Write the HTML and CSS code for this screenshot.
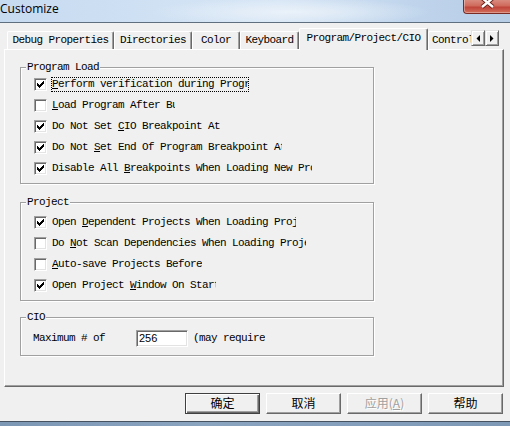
FILE: index.html
```html
<!DOCTYPE html>
<html>
<head>
<meta charset="utf-8">
<title>Customize</title>
<link rel="stylesheet" href="styles.css">
</head>
<body>
<div class="window">
  <div class="titlebar">
    <span class="title">Customize</span>
    <div class="close">
      <svg width="47" height="14" viewBox="0 0 47 14">
        <path d="M19 -2 L30 7 M30 -2 L19 7" stroke="#6b2219" stroke-width="4.2" fill="none"/>
        <path d="M19 -2 L30 7 M30 -2 L19 7" stroke="#ffffff" stroke-width="2.4" fill="none"/>
      </svg>
    </div>
  </div>

  <div class="client">
    <div class="tabstrip">
      <div class="tab t-debug">Debug Properties</div>
      <div class="tab t-dirs">Directories</div>
      <div class="tab t-color">Color</div>
      <div class="tab t-keys">Keyboard</div>
      <div class="tab t-prog active">Program/Project/CIO</div>
      <div class="tab t-ctrl">Control Panel</div>
      <div class="spin">
        <span class="spinbtn"><svg width="4" height="7" viewBox="0 0 4 7"><path d="M4 0 L4 7 L0.5 3.5 Z" fill="#000"/></svg></span>
        <span class="spinbtn"><svg width="4" height="7" viewBox="0 0 4 7"><path d="M0 0 L0 7 L3.5 3.5 Z" fill="#000"/></svg></span>
      </div>
    </div>

    <div class="panel">
      <div class="group g-load">
        <span class="caption">Program Load</span>
        <div class="row"><span class="cb on"><svg width="11" height="11" viewBox="0 0 11 11"><path d="M8 2h1v1H8zM7 3h2v1H7zM2 4h1v1H2zM6 4h3v1H6zM2 5h2v1H2zM5 5h3v1H5zM2 6h5v1H2zM3 7h3v1H3zM4 8h1v1H4z" fill="#000"/></svg></span><span class="lbl focus w-verify"><u>P</u>erform verification during Program Load</span></div>
        <div class="row"><span class="cb"></span><span class="lbl w-loadafter"><u>L</u>oad Program After Build</span></div>
        <div class="row"><span class="cb on"><svg width="11" height="11" viewBox="0 0 11 11"><path d="M8 2h1v1H8zM7 3h2v1H7zM2 4h1v1H2zM6 4h3v1H6zM2 5h2v1H2zM5 5h3v1H5zM2 6h5v1H2zM3 7h3v1H3zM4 8h1v1H4z" fill="#000"/></svg></span><span class="lbl w-cio">Do Not Set <u>C</u>IO Breakpoint At Load</span></div>
        <div class="row"><span class="cb on"><svg width="11" height="11" viewBox="0 0 11 11"><path d="M8 2h1v1H8zM7 3h2v1H7zM2 4h1v1H2zM6 4h3v1H6zM2 5h2v1H2zM5 5h3v1H5zM2 6h5v1H2zM3 7h3v1H3zM4 8h1v1H4z" fill="#000"/></svg></span><span class="lbl w-eop">Do Not <u>S</u>et End Of Program Breakpoint At Load</span></div>
        <div class="row"><span class="cb on"><svg width="11" height="11" viewBox="0 0 11 11"><path d="M8 2h1v1H8zM7 3h2v1H7zM2 4h1v1H2zM6 4h3v1H6zM2 5h2v1H2zM5 5h3v1H5zM2 6h5v1H2zM3 7h3v1H3zM4 8h1v1H4z" fill="#000"/></svg></span><span class="lbl w-disable">Disable All <u>B</u>reakpoints When Loading New Programs</span></div>
      </div>

      <div class="group g-proj">
        <span class="caption">Project</span>
        <div class="row"><span class="cb on"><svg width="11" height="11" viewBox="0 0 11 11"><path d="M8 2h1v1H8zM7 3h2v1H7zM2 4h1v1H2zM6 4h3v1H6zM2 5h2v1H2zM5 5h3v1H5zM2 6h5v1H2zM3 7h3v1H3zM4 8h1v1H4z" fill="#000"/></svg></span><span class="lbl w-dep">Open <u>D</u>ependent Projects When Loading Projects</span></div>
        <div class="row"><span class="cb"></span><span class="lbl w-scan">Do <u>N</u>ot Scan Dependencies When Loading Projects</span></div>
        <div class="row"><span class="cb"></span><span class="lbl w-auto"><u>A</u>uto-save Projects Before Build</span></div>
        <div class="row"><span class="cb on"><svg width="11" height="11" viewBox="0 0 11 11"><path d="M8 2h1v1H8zM7 3h2v1H7zM2 4h1v1H2zM6 4h3v1H6zM2 5h2v1H2zM5 5h3v1H5zM2 6h5v1H2zM3 7h3v1H3zM4 8h1v1H4z" fill="#000"/></svg></span><span class="lbl w-win">Open Project <u>W</u>indow On Startup</span></div>
      </div>

      <div class="group g-cio">
        <span class="caption">CIO</span>
        <div class="cio-row">
          <span class="lbl w-max">Maximum # of</span>
          <span class="edit">256</span>
          <span class="lbl w-may">(may require restart)</span>
        </div>
      </div>
    </div>

    <div class="buttons">
      <span class="btn default">确定</span>
      <span class="btn">取消</span>
      <span class="btn disabled">应用(<u>A</u>)</span>
      <span class="btn">帮助</span>
    </div>
  </div>

  <div class="frame-bottom"></div>
</div>
</body>
</html>
```

FILE: styles.css
```css
html, body {
  margin: 0;
  padding: 0;
}

body {
  width: 510px;
  height: 426px;
  overflow: hidden;
  background: #f0f0f0;
}

.window {
  display: flex;
  flex-direction: column;
  height: 426px;
}

/* ---------- title bar ---------- */
.titlebar {
  height: 22px;
  border-bottom: 1px solid #5f6f80;
  display: flex;
  justify-content: space-between;
  align-items: flex-start;
  background:
    radial-gradient(ellipse 140px 14px at 290px 12px, rgba(236, 243, 250, 0.9), rgba(236, 243, 250, 0)),
    linear-gradient(90deg, #c6daf0 0%, #d1e2f4 35%, #d6e5f5 55%, #c0d5ec 80%, #b7cde6 100%);
}

.title {
  font-family: "Open Sans", "Noto Sans", sans-serif;
  font-size: 12px;
  line-height: 16px;
  padding-top: 1px;
  color: #000;
}

.close {
  width: 47px;
  height: 14px;
  box-sizing: border-box;
  border: 1px solid #7a2c24;
  border-top: 0;
  border-right: 0;
  border-radius: 0 0 0 4px;
  background: linear-gradient(180deg, #d98a7e 0%, #cf6a5c 45%, #c0443a 55%, #d2705c 100%);
  box-shadow: inset 1px 0 0 rgba(255, 255, 255, 0.35), inset 0 -1px 0 rgba(255, 255, 255, 0.3);
  overflow: hidden;
}

.close svg {
  display: block;
  margin-left: -1px;
}

/* ---------- client ---------- */
.client {
  display: flex;
  flex-direction: column;
}

.tabstrip {
  margin-top: 5px;
  height: 21px;
  padding-left: 7px;
  display: flex;
  align-items: flex-end;
  position: relative;
  z-index: 1;
}

.tab {
  box-sizing: border-box;
  height: 18px;
  border-top: 1px solid #ffffff;
  border-left: 1px solid #ffffff;
  border-right: 1px solid #696969;
  box-shadow: inset -1px 0 0 #a0a0a0;
  border-radius: 2px 2px 0 0;
  font-family: "Liberation Mono", "DejaVu Sans Mono", monospace;
  font-size: 11px;
  letter-spacing: -0.6px;
  line-height: 17px;
  color: #000;
  text-align: center;
  white-space: nowrap;
  overflow: hidden;
  flex: none;
}

.t-debug { width: 107px; }
.t-dirs { width: 78px; }
.t-color { width: 48px; }
.t-keys { width: 59px; }
.t-prog { width: 129px; }
.t-ctrl {
  width: 43px;
  text-align: left;
  padding-left: 3px;
  border-right: 0;
  box-shadow: none;
}

.tab.active {
  height: 22px;
  margin-bottom: -1px;
  background: #f0f0f0;
  line-height: 18px;
}

.spin {
  display: flex;
  align-self: flex-start;
  margin-top: 2px;
}

.spinbtn {
  box-sizing: border-box;
  width: 14px;
  height: 16px;
  background: #f0f0f0;
  border-top: 1px solid #e3e3e3;
  border-left: 1px solid #e3e3e3;
  border-right: 1px solid #696969;
  border-bottom: 1px solid #696969;
  box-shadow: inset 1px 1px 0 #ffffff, inset -1px -1px 0 #a0a0a0;
  display: flex;
  align-items: center;
  justify-content: center;
}

/* ---------- panel ---------- */
.panel {
  box-sizing: border-box;
  margin-left: 4px;
  width: 500px;
  height: 338px;
  border-top: 1px solid #ffffff;
  border-left: 1px solid #ffffff;
  border-right: 1px solid #696969;
  border-bottom: 1px solid #696969;
  box-shadow: inset -1px -1px 0 #a0a0a0;
}

.group {
  position: relative;
  box-sizing: border-box;
  width: 354px;
  margin-left: 15px;
  border: 1px solid #a0a0a0;
  box-shadow: inset 1px 1px 0 #ffffff, 1px 1px 0 #ffffff;
}

.g-load {
  margin-top: 17px;
  padding: 6px 0 4px 13px;
}

.g-proj {
  margin-top: 18px;
  padding: 9px 0 4px 13px;
}

.g-cio {
  margin-top: 16px;
  padding: 12px 0 8px 12px;
}

.caption {
  position: absolute;
  top: -7px;
  left: 5px;
  padding: 0 1px;
  background: #f0f0f0;
  font-family: "Liberation Mono", "DejaVu Sans Mono", monospace;
  font-size: 11px;
  letter-spacing: -0.6px;
  line-height: 13px;
  color: #000;
  white-space: nowrap;
}

.row {
  height: 21px;
  display: flex;
  align-items: center;
}

.cb {
  box-sizing: border-box;
  width: 13px;
  height: 13px;
  flex: none;
  background: #ffffff;
  border-top: 1px solid #a0a0a0;
  border-left: 1px solid #a0a0a0;
  border-right: 1px solid #ffffff;
  border-bottom: 1px solid #ffffff;
  box-shadow: inset 1px 1px 0 #696969, inset -1px -1px 0 #e3e3e3;
  margin-right: 5px;
}

.cb svg {
  display: block;
}

.lbl {
  font-family: "Liberation Mono", "DejaVu Sans Mono", monospace;
  font-size: 11px;
  letter-spacing: -0.6px;
  line-height: 13px;
  color: #000;
  white-space: nowrap;
  overflow: hidden;
  flex: none;
}

.lbl u {
  text-underline-offset: 1px;
}

.focus {
  outline: 1px dotted #000;
}

.w-verify { width: 196px; }
.w-loadafter { width: 123px; }
.w-cio { width: 168px; }
.w-eop { width: 230px; }
.w-disable { width: 260px; }
.w-dep { width: 244px; }
.w-scan { width: 254px; }
.w-auto { width: 150px; }
.w-win { width: 164px; }
.w-max { width: 103px; }
.w-may { width: 72px; margin-left: 5px; }

.cio-row {
  height: 17px;
  display: flex;
  align-items: center;
}

.edit {
  box-sizing: border-box;
  width: 52px;
  height: 17px;
  flex: none;
  background: #ffffff;
  border-top: 1px solid #a0a0a0;
  border-left: 1px solid #a0a0a0;
  border-right: 1px solid #ffffff;
  border-bottom: 1px solid #ffffff;
  box-shadow: inset 1px 1px 0 #696969, inset -1px -1px 0 #e3e3e3;
  padding-left: 2px;
  font-family: "Liberation Sans", Arial, sans-serif;
  font-size: 11px;
  line-height: 15px;
  color: #000;
}

/* ---------- buttons ---------- */
.buttons {
  display: flex;
  justify-content: flex-end;
  gap: 6px;
  margin-top: 6px;
  padding-right: 7px;
}

.btn {
  box-sizing: border-box;
  width: 75px;
  height: 21px;
  background: #f0f0f0;
  border-top: 1px solid #ffffff;
  border-left: 1px solid #ffffff;
  border-right: 1px solid #696969;
  border-bottom: 1px solid #696969;
  box-shadow: inset -1px -1px 0 #a0a0a0;
  font-family: "Noto Sans CJK SC", "Noto Sans", sans-serif;
  font-size: 12px;
  line-height: 18px;
  color: #000;
  text-align: center;
}

.btn.default {
  border: 1px solid #404040;
  box-shadow: inset 1px 1px 0 #ffffff, inset -1px -1px 0 #696969, inset -2px -2px 0 #a0a0a0;
}

.btn.disabled {
  color: #a0a0a0;
  text-shadow: 1px 1px 0 #ffffff;
}

/* ---------- frame ---------- */
.frame-bottom {
  margin-top: auto;
  height: 4px;
  border-top: 1px solid #46525f;
  background: linear-gradient(90deg, #7c97b4 0%, #8aa4c0 40%, #7e99b6 100%);
}
```
